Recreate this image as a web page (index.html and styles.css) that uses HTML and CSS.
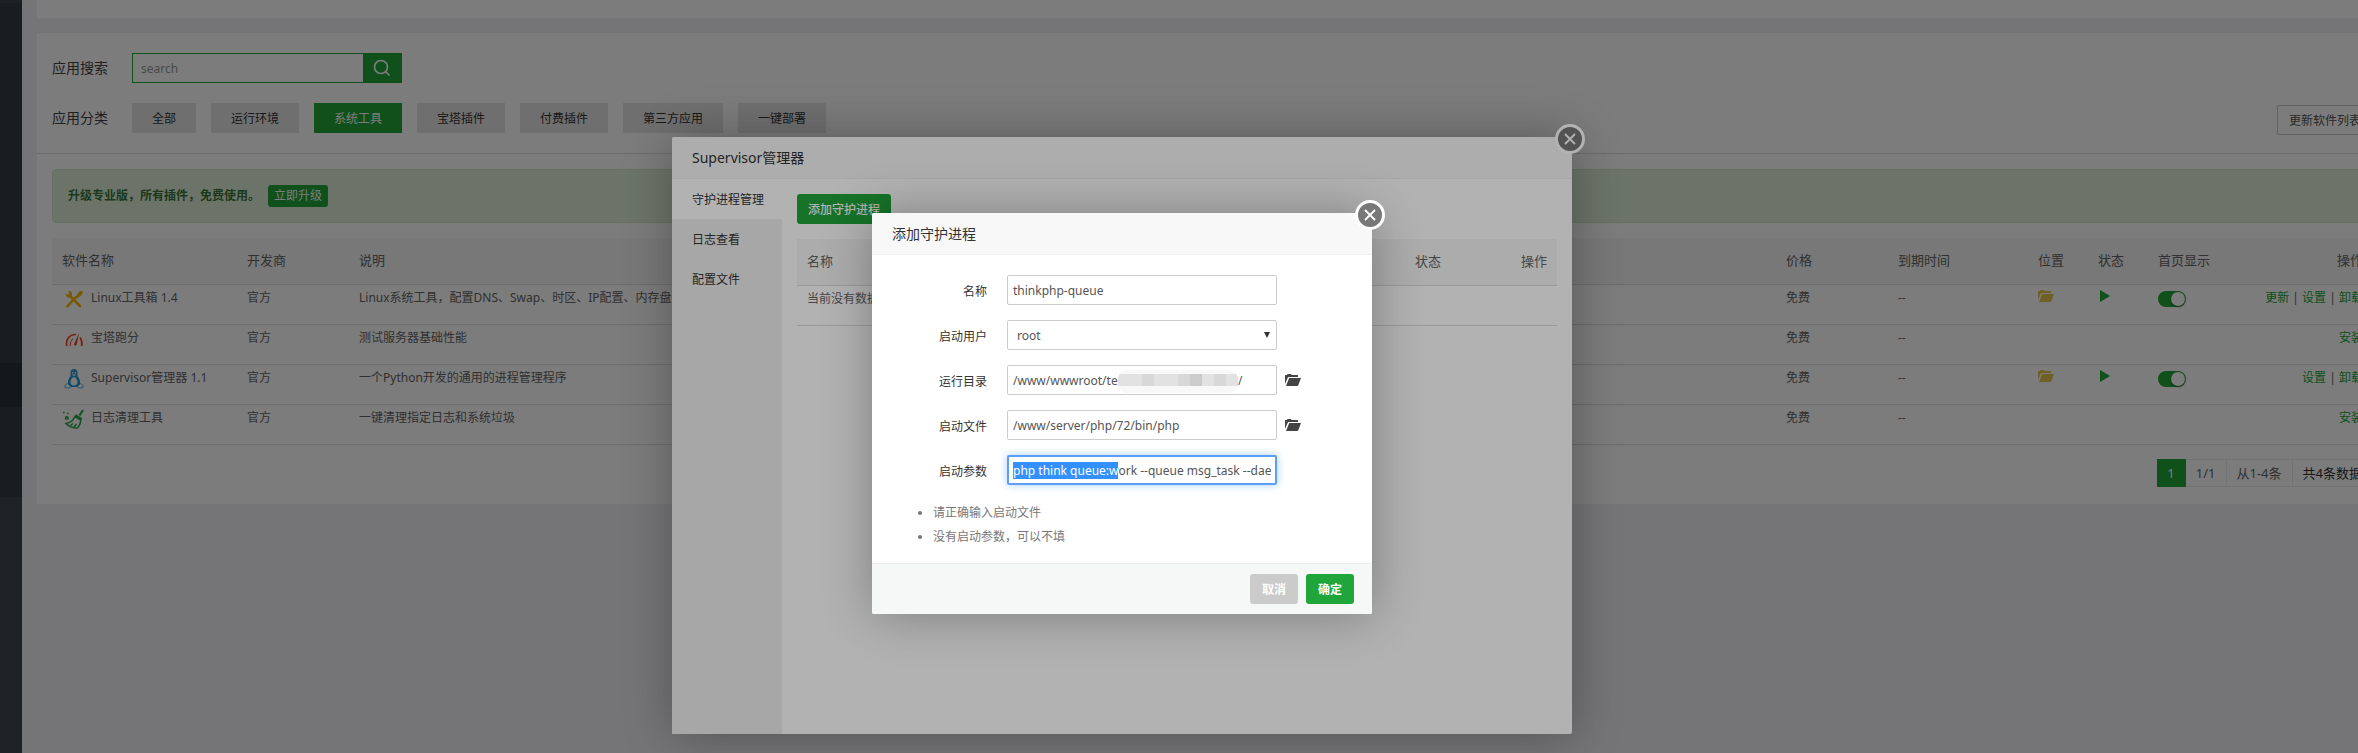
FILE: index.html
```
<!DOCTYPE html>
<html lang="zh-CN">
<head>
<meta charset="utf-8">
<title>软件管理</title>
<link rel="stylesheet" href="styles.css">
</head>
<body>
<svg width="0" height="0" class="defs">
  <symbol id="folder" viewBox="0 0 16 12"><path d="M0 10V1.500Q0 1 .5 1H2L2.500 0H6L6.500 1H12.500Q13 1 13 1.500V3H4Q3 3 2.600 4Z"/><path d="M4.200 4H16L13.400 11Q13 12 12 12H1Z"/></symbol>
  <symbol id="cross" viewBox="0 0 12 12"><path d="M1.500 1.500L10.500 10.500M10.500 1.500L1.500 10.500" fill="none" stroke="currentColor" stroke-width="1.800" stroke-linecap="round"/></symbol>
</svg>
<div class="app">
  <nav class="sidebar" aria-label="菜单"><div class="side-top"></div><div class="side-main"></div><div class="side-active"></div><div class="side-mid"></div><div class="side-end"></div></nav>
  <main class="content">
    <section class="card card-top"></section>
    <section class="card">
      <div class="filters">
        <div class="filter-row">
          <label class="filter-label" for="search">应用搜索</label>
          <div class="search">
            <input id="search" class="search-input" type="text" placeholder="search">
            <button class="search-btn" type="button" aria-label="搜索"><svg width="18" height="18" viewBox="0 0 18 18" fill="none" stroke="currentColor" stroke-width="1.700"><circle cx="8" cy="8" r="6.500"/><path d="M12.500 12.500L16.500 16.500"/></svg></button>
          </div>
        </div>
        <div class="filter-row">
          <span class="filter-label">应用分类</span>
          <div class="cats">
            <button class="cat">全部</button><button class="cat">运行环境</button><button class="cat on">系统工具</button><button class="cat">宝塔插件</button><button class="cat">付费插件</button><button class="cat">第三方应用</button><button class="cat">一键部署</button>
          </div>
          <button class="refresh">更新软件列表</button>
        </div>
      </div>
      <div class="panel">
        <div class="alert"><strong>升级专业版，所有插件，免费使用。</strong><button class="upgrade">立即升级</button></div>
        <table class="grid soft">
          <colgroup><col class="c-name"><col class="c-dev"><col><col class="c-price"><col class="c-time"><col class="c-pos"><col class="c-pos"><col class="c-show"><col class="c-op"></colgroup>
          <thead><tr><th>软件名称</th><th>开发商</th><th>说明</th><th>价格</th><th>到期时间</th><th>位置</th><th>状态</th><th>首页显示</th><th class="r">操作</th></tr></thead>
          <tbody>
            <tr>
              <td><span class="soft-name"><svg class="ico" viewBox="0 0 20 20"><path d="M3.200 17.500L12 8" stroke="#f5b800" stroke-width="2.400" stroke-linecap="round"/><path d="M11 8.500L14.800 3.200Q16.800 1 18.300 2.300Q19.600 4 17.500 6L12.500 10Z" fill="#f5b800"/><path d="M6.500 7.500L16 17" stroke="#f5b800" stroke-width="2.600" stroke-linecap="round"/><path d="M1.500 4.500L3.800 5.800L5.300 4.300L4.200 1.800Q7.500 1.600 8 4.500V7L6 8.800L3.500 8.300Q1.500 7.200 1.500 4.500Z" fill="#f5b800"/></svg>Linux工具箱 1.4</span></td>
              <td>官方</td><td>Linux系统工具，配置DNS、Swap、时区、IP配置、内存盘</td><td>免费</td><td>--</td>
              <td><svg class="folder gold"><use href="#folder"/></svg></td><td><svg class="play" viewBox="0 0 10 12"><path d="M0 0L10 6L0 12Z"/></svg></td><td><input class="switch" type="checkbox" checked aria-label="首页显示"></td>
              <td class="r"><a href="#">更新</a> | <a href="#">设置</a> | <a href="#">卸载</a></td>
            </tr>
            <tr>
              <td><span class="soft-name"><svg class="ico" viewBox="0 0 20 20" fill="none"><path d="M3 17Q1.500 12 5 8Q8 5 12 5.500" stroke="#f0441c" stroke-width="1.600"/><path d="M6 17Q6 12 9 9.500" stroke="#f0441c" stroke-width="1"/><path d="M16 8.500Q18.500 12 17.600 17" stroke="#f0441c" stroke-width="1.800"/><path d="M15 4L12.800 15.500Q11.500 17.500 9.800 15.800Z" fill="#f0441c"/></svg>宝塔跑分</span></td>
              <td>官方</td><td>测试服务器基础性能</td><td>免费</td><td>--</td><td></td><td></td><td></td>
              <td class="r"><a href="#">安装</a></td>
            </tr>
            <tr>
              <td><span class="soft-name"><svg class="ico" viewBox="0 0 20 20"><path d="M10 0Q6.500 0 6.500 4V7Q3.500 10.500 4 15L6 18H14L16 15Q16.500 10.500 13.500 7V4Q13.500 0 10 0Z" fill="#2a9bd6"/><path d="M10 8Q7.500 8.500 6.500 12.500Q6.500 16.500 10 16.500Q13.500 16.500 13.500 12.500Q12.500 8.500 10 8Z" fill="#fff"/><path d="M8 5.500H12L10 7.500ZM8 3H9.200V4.500H8ZM10.800 3H12V4.500H10.800Z" fill="#fff"/><path d="M3.500 14.500L6.800 17.500Q6 20 1 18.500Q0 16 3.500 14.500ZM16.500 14.500L13.200 17.500Q14 20 19 18.500Q20 16 16.500 14.500Z" fill="#fff" stroke="#2a9bd6" stroke-width=".8"/></svg>Supervisor管理器 1.1</span></td>
              <td>官方</td><td>一个Python开发的通用的进程管理程序</td><td>免费</td><td>--</td>
              <td><svg class="folder gold"><use href="#folder"/></svg></td><td><svg class="play" viewBox="0 0 10 12"><path d="M0 0L10 6L0 12Z"/></svg></td><td><input class="switch" type="checkbox" checked aria-label="首页显示"></td>
              <td class="r"><a href="#">设置</a> | <a href="#">卸载</a></td>
            </tr>
            <tr>
              <td><span class="soft-name"><svg class="ico ico-wide" viewBox="0 0 22 20" fill="none" stroke="#2aa84a" stroke-width="1.500"><path d="M21 1L17.500 6.500" stroke-width="2.200"/><path d="M13.500 6L20 10M12.800 7.500L18.800 11Q18.500 16 15.500 19Q8 19 4 14.500Q10.500 13.500 12.800 7.500ZM8.500 16.500L11 14.500M12 18L14.500 15"/><path d="M1 3.500H2.600M5 4.500H6.600" stroke-width="1.600"/><circle cx="4.800" cy="9" r="1.300"/></svg>日志清理工具</span></td>
              <td>官方</td><td>一键清理指定日志和系统垃圾</td><td>免费</td><td>--</td><td></td><td></td><td></td>
              <td class="r"><a href="#">安装</a></td>
            </tr>
          </tbody>
        </table>
        <div class="pager"><span class="now">1</span><span>1/1</span><span>从1-4条</span><span class="total">共4条数据</span></div>
      </div>
    </section>
  </main>
</div>

<div class="shade"></div>
<section class="layer layer-manager" role="dialog" aria-label="Supervisor管理器">
  <h2 class="layer-title">Supervisor管理器</h2>
  <button class="close" aria-label="关闭"><svg><use href="#cross"/></svg></button>
  <div class="manager">
    <div class="menu"><button class="menu-item on">守护进程管理</button><button class="menu-item">日志查看</button><button class="menu-item">配置文件</button></div>
    <div class="manager-body">
      <button class="btn btn-add">添加守护进程</button>
      <table class="grid"><thead><tr><th>名称</th><th class="c-state">状态</th><th class="c-act r">操作</th></tr></thead><tbody><tr><td colspan="3">当前没有数据</td></tr></tbody></table>
    </div>
  </div>
</section>

<div class="shade"></div>
<section class="layer layer-form" role="dialog" aria-label="添加守护进程">
  <h2 class="layer-title">添加守护进程</h2>
  <button class="close" aria-label="关闭"><svg><use href="#cross"/></svg></button>
  <form class="form">
    <div class="line"><label for="f-name">名称</label><input id="f-name" class="field" type="text" value="thinkphp-queue"></div>
    <div class="line"><label for="f-user">启动用户</label><div class="field-wrap"><select id="f-user" class="field"><option>root</option></select><span class="caret"></span></div></div>
    <div class="line"><label for="f-dir">运行目录</label><div class="field-wrap"><input id="f-dir" class="field" type="text" value="/www/wwwroot/te"><span class="mask"><i></i><i></i><i></i><i></i><i></i><i></i><i></i><i></i><i></i><i></i></span><span class="tail">/</span></div><svg class="folder dark"><use href="#folder"/></svg></div>
    <div class="line"><label for="f-file">启动文件</label><input id="f-file" class="field" type="text" value="/www/server/php/72/bin/php"><svg class="folder dark"><use href="#folder"/></svg></div>
    <div class="line"><label for="f-args">启动参数</label><input id="f-args" class="field focus" type="text" value="php think queue:work --queue msg_task --daemon"></div>
    <ul class="tips"><li>请正确输入启动文件</li><li>没有启动参数，可以不填</li></ul>
    <div class="foot"><button class="btn btn-cancel" type="button">取消</button><button class="btn" type="button">确定</button></div>
  </form>
</section>
<script src="main.js"></script>
</body>
</html>
```
FILE: styles.css
```
* { box-sizing: border-box; }
body { margin: 0; height: 100vh; overflow: hidden; position: relative; background: #f1f1f5; color: #444; font: 12px/18px "Noto Sans", "Noto Sans CJK SC", sans-serif; }
button, input, select { font: inherit; color: inherit; }
button { border: 0; padding: 0; cursor: pointer; white-space: nowrap; }
a { color: #20a53a; text-decoration: none; }
.defs { position: absolute; }

.app { display: flex; height: 100%; }
.sidebar { width: 22px; flex: none; display: flex; flex-direction: column; background: #353d44; }
.side-top { height: 3px; background: #3d464d; }
.side-main { height: 360px; }
.side-active { height: 44px; background: #2c3138; }
.side-mid { height: 90px; }
.side-end { flex: 1; background: #3c484c; }
.content { flex: 1; min-width: 0; margin-right: -30px; padding-left: 15px; display: flex; flex-direction: column; gap: 15px; }
.card { background: #fff; }
.card-top { height: 18px; flex: none; }

.filters { padding: 20px 15px; display: flex; flex-direction: column; gap: 20px; border-bottom: 1px solid #ddd; }
.filter-row { display: flex; align-items: center; height: 30px; }
.filter-label { width: 80px; font-size: 14px; color: #444; }
.search { display: flex; width: 270px; height: 30px; border: 1px solid #20a53a; }
.search-input { flex: 1; min-width: 0; border: 0; padding: 2px 8px 0; outline: 0; background: #fff; }
.search-input::placeholder { color: #999; }
.search-btn { width: 38px; background: #20a53a; color: #fff; display: flex; align-items: center; justify-content: center; }
.cats { display: flex; gap: 15px; flex: 1; }
.cat { height: 30px; padding: 1px 20px 0; background: #e6e6e6; color: #333; }
.cat.on { background: #20a53a; color: #fff; }
.refresh { height: 30px; margin-top: 4px; padding: 2px 11px 0; background: #fff; border: 1px solid #ccc; border-radius: 2px; color: #555; }

.panel { padding: 15px 15px 17px; }
.alert { display: flex; align-items: center; gap: 8px; height: 54px; padding: 0 15px; background: #dff0d8; border: 1px solid #d0e9c6; border-radius: 4px; color: #3c763d; }
.upgrade { height: 22px; padding: 0 6px; border-radius: 3px; background: #20a53a; color: #fff; }

.grid { width: 100%; table-layout: fixed; border-collapse: collapse; margin-top: 15px; color: #666; }
.grid th { height: 46px; padding: 0 10px 2px; font-size: 13px; font-weight: 400; text-align: left; background: #f6f6f6; border-bottom: 1px solid #ddd; }
.grid td { height: 40px; padding: 4px 10px; vertical-align: top; white-space: nowrap; border-bottom: 1px solid #ddd; }
.grid .r { text-align: right; }
.c-name { width: 185px; }
.c-dev { width: 112px; }
.c-price { width: 112px; }
.c-time { width: 140px; }
.c-pos { width: 60px; }
.c-show { width: 100px; }
.c-op { width: 125px; }
.soft-name { display: flex; align-items: center; height: 18px; gap: 7px; }
.ico { width: 20px; height: 20px; margin: 3px 0 0 2px; fill: none; }
.ico-wide { width: 22px; margin-left: 0; }
.folder { width: 16px; height: 12px; }
.gold { fill: #e6c84c; }
.play { width: 10px; height: 12px; fill: #20a53a; margin-left: 2px; }
.switch { appearance: none; display: block; width: 28px; height: 16px; margin: 2px 0 0; padding: 1px; border-radius: 8px; background: #20a53a; }
.switch::before { content: ""; display: block; width: 14px; height: 14px; margin-left: 12px; border-radius: 50%; background: #fff; box-shadow: 0 1px 2px rgba(0,0,0,.4); }

.pager { display: flex; justify-content: flex-end; margin-top: 14px; font-size: 13px; color: #666; }
.pager span { height: 28px; line-height: 26px; padding: 0 10px; border: 1px solid #ececec; border-left: 0; }
.pager .now { background: #20a53a; border-color: #20a53a; color: #fff; }
.pager .total { color: #333; }

.shade { position: absolute; inset: 0; background: rgba(0,0,0,.3); }
.layer { position: absolute; background: #fff; border-radius: 2px; box-shadow: 1px 1px 50px rgba(0,0,0,.3); }
.layer-manager { left: calc(50% - 507px); top: 137px; width: 900px; bottom: 19px; display: flex; flex-direction: column; }
.layer-form { left: calc(50% - 307px); top: 213px; width: 500px; }
.layer-title { margin: 0; height: 42px; padding: 0 20px; font-size: 14px; line-height: 42px; font-weight: 400; color: #333; background: #f8f8f8; border-bottom: 1px solid #eee; border-radius: 2px 2px 0 0; }
.close { position: absolute; top: -13px; right: -13px; width: 30px; height: 30px; border: 3px solid #fff; border-radius: 50%; background: #787878; color: #fff; display: flex; align-items: center; justify-content: center; }
.close svg { width: 12px; height: 12px; }

.manager { flex: 1; display: flex; }
.menu { width: 110px; display: flex; flex-direction: column; background: #f0f0f0; }
.menu-item { height: 40px; padding: 2px 20px 0; text-align: left; background: none; color: #333; }
.menu-item.on { background: #fff; }
.manager-body { flex: 1; padding: 15px; }
.btn { height: 30px; min-width: 48px; padding: 1px 11px 0; border-radius: 3px; background: #20a53a; color: #fff; font-weight: 700; }
.btn-add { font-weight: 500; display: block; }
.c-state { width: 92px; }
.c-act { width: 60px; }

.form { padding-top: 20px; display: flex; flex-direction: column; gap: 15px; }
.line { display: flex; align-items: center; height: 30px; }
.line label { width: 115px; margin-right: 20px; padding-top: 3px; text-align: right; color: #333; }
.field-wrap { position: relative; }
.field { display: block; width: 270px; height: 30px; padding: 1px 5px 0; border: 1px solid #ccc; border-radius: 2px; background: #fff; color: #555; outline: 0; }
select.field { appearance: none; padding: 1px 9px 0; }
.focus { border: 2px solid #5c9ffb; padding: 1px 4px 0; box-shadow: 0 0 8px rgba(102,175,233,.6); }
.focus::selection { background: #3390ff; color: #fff; }
.caret { position: absolute; right: 7px; top: 12px; border: 3px solid transparent; border-top: 6px solid #333; border-bottom: 0; pointer-events: none; }
.mask { position: absolute; left: 111px; top: 5px; width: 120px; height: 23px; padding: 4px 0 7px; border-radius: 9px; background: #f8f8f8; display: flex; overflow: hidden; }
.mask i { flex: 1; background: #e2e2e2; }
.mask i:nth-child(3n) { background: #d8d8d8; }
.mask i:nth-child(7) { background: #ccc; }
.tail { position: absolute; left: 231px; top: 7px; color: #555; }
.dark { fill: #444; margin-left: 8px; }
.tips { margin: 0; padding: 1px 0 0 61px; line-height: 24px; color: #777; }
.foot { display: flex; justify-content: flex-end; gap: 8px; margin-top: -1px; padding: 10px 18px; border-top: 1px solid #ececec; background: #f6f8f8; border-radius: 0 0 2px 2px; }
.form .foot { margin-top: 14px; }
.form { gap: 0; }
.line { margin-bottom: 15px; }
.btn-cancel { background: #cbcbcb; }
```
FILE: main.js
```
const args = document.getElementById("f-args");
args.focus();
args.setSelectionRange(0, "php think queue:w".length);
```
